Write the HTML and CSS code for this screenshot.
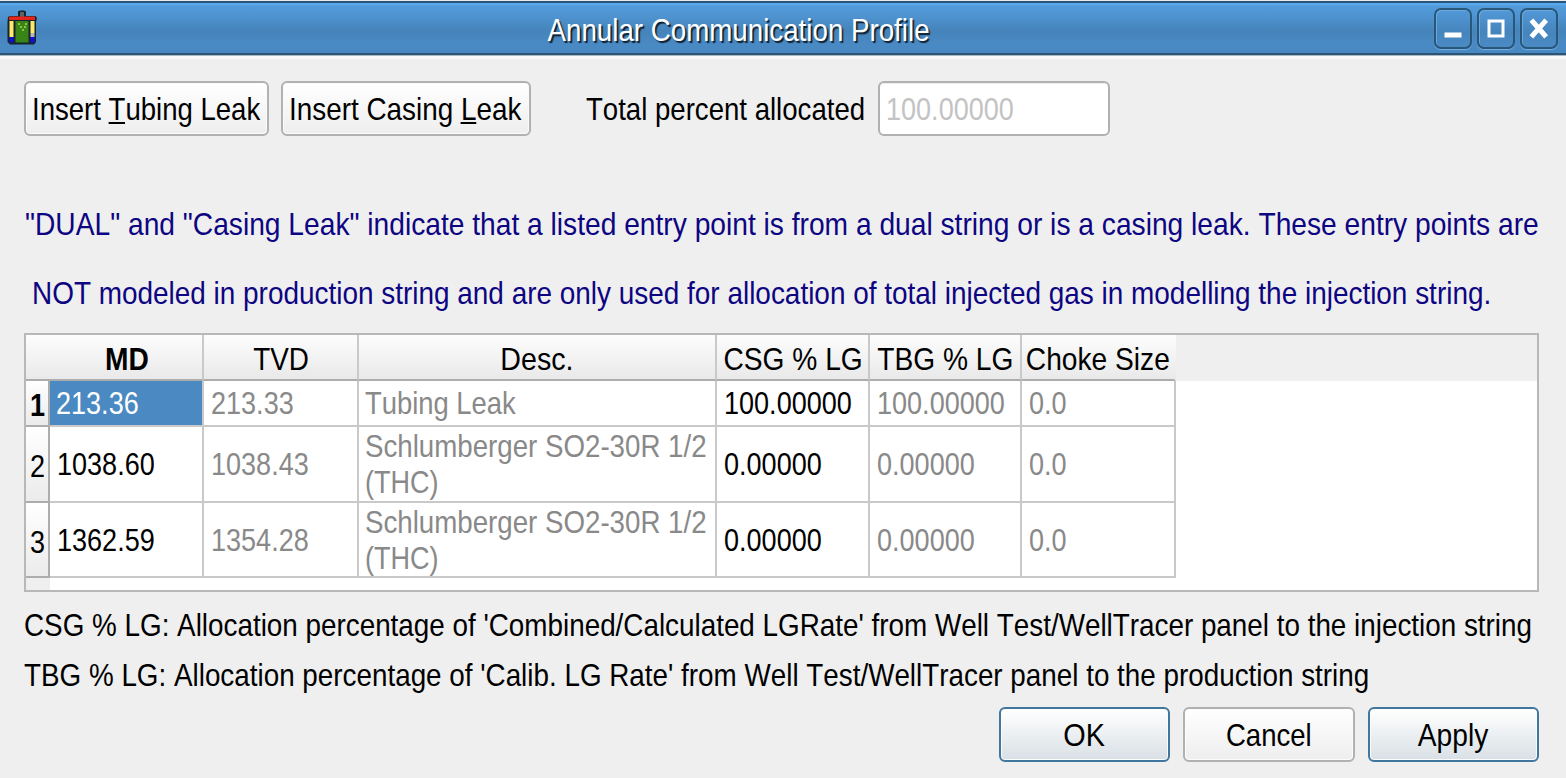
FILE: index.html
```
<!DOCTYPE html>
<html lang="en">
<head>
<meta charset="utf-8">
<title>Annular Communication Profile</title>
<link rel="stylesheet" href="styles.css">
</head>
<body>
<div class="window">
  <header class="titlebar">
    <svg class="app-icon" viewBox="0 0 32 38" width="32" height="38">
      <path d="M12 7V2.500l2-1h4l2 1V7h9.500l1.500 2-1 4v20l-2 2.500H4L1.500 33V13L2 8l1.500-1z" fill="#16242c"/>
      <path d="M14 3h4v5h-4z" fill="#59636a"/>
      <rect x="3.500" y="12" width="4" height="16" fill="#fbe96a"/>
      <rect x="24.500" y="12" width="4" height="12" fill="#fbe96a"/>
      <rect x="24.500" y="24" width="4" height="4" fill="#b9b9b4"/>
      <rect x="3.500" y="28" width="4" height="5.500" fill="#1010dd"/>
      <rect x="24.500" y="28" width="4" height="5.500" fill="#1010dd"/>
      <rect x="3" y="7.500" width="26" height="3.500" fill="#e4251b"/>
      <rect x="9.500" y="12" width="13" height="21.500" fill="#398416"/>
      <path d="M12 14h2v2h-2zM19 14h2v2h-2zM14 17h2v2h-2zM18 17h2v2h-2zM16 20h2v2h-2z" fill="#8cc43c"/>
    </svg>
    <h1 class="title"><span class="label title-text">Annular Communication Profile</span></h1>
    <div class="controls">
      <button class="control" aria-label="Minimize"><svg viewBox="2 2 34 37" width="34" height="37"><rect x="10.500" y="24.500" width="17" height="5" fill="#fff"/></svg></button>
      <button class="control" aria-label="Maximize"><svg viewBox="2 2 34 37" width="34" height="37"><path d="M12 13h14v15H12z" fill="none" stroke="#fff" stroke-width="3"/></svg></button>
      <button class="control" aria-label="Close"><svg viewBox="2 2 34 37" width="34" height="37"><path d="M13 14l11.500 13M24.500 14L13 27" fill="none" stroke="#fff" stroke-width="5" stroke-linecap="square"/></svg></button>
    </div>
  </header>
  <main class="content">
    <div class="toolbar">
      <button class="button tubing"><span class="label tubing-text">Insert <span class="key">T</span>ubing Leak</span></button>
      <button class="button casing"><span class="label casing-text">Insert Casing <span class="key">L</span>eak</span></button>
      <span class="total"><span class="label total-text">Total percent allocated</span></span>
      <div class="field"><span class="label digits">100.00000</span></div>
    </div>
    <div class="notice">
      <p class="line first"><span class="label notice-first">"DUAL" and "Casing Leak" indicate that a listed entry point is from a dual string or is a casing leak. These entry points are</span></p>
      <p class="line second"><span class="label notice-second">NOT modeled in production string and are only used for allocation of total injected gas in modelling the injection string.</span></p>
    </div>
    <div class="table">
      <div class="row head">
        <div class="corner"></div>
        <div class="cell md"><span class="label md-text">MD</span></div>
        <div class="cell"><span class="label tvd-text">TVD</span></div>
        <div class="cell"><span class="label desc-text">Desc.</span></div>
        <div class="cell lg"><span class="label csg-text">CSG % LG</span></div>
        <div class="cell"><span class="label csg-text">TBG % LG</span></div>
        <div class="cell last"><span class="label choke-text">Choke Size</span></div>
      </div>
      <div class="row r1">
        <div class="number bold"><span class="label digits">1</span></div>
        <div class="cell selected"><span class="label digits">213.36</span></div>
        <div class="cell dim"><span class="label digits">213.33</span></div>
        <div class="cell dim desc"><span class="label type-text">Tubing Leak</span></div>
        <div class="cell"><span class="label digits">100.00000</span></div>
        <div class="cell dim"><span class="label digits">100.00000</span></div>
        <div class="cell dim"><span class="label digits">0.0</span></div>
      </div>
      <div class="row r2">
        <div class="number"><span class="label digits">2</span></div>
        <div class="cell"><span class="label digits">1038.60</span></div>
        <div class="cell dim"><span class="label digits">1038.43</span></div>
        <div class="cell dim desc stack"><span class="label valve-text">Schlumberger SO2-30R 1/2</span><span class="label digits">(THC)</span></div>
        <div class="cell"><span class="label digits">0.00000</span></div>
        <div class="cell dim"><span class="label digits">0.00000</span></div>
        <div class="cell dim"><span class="label digits">0.0</span></div>
      </div>
      <div class="row r3">
        <div class="number"><span class="label digits">3</span></div>
        <div class="cell"><span class="label digits">1362.59</span></div>
        <div class="cell dim"><span class="label digits">1354.28</span></div>
        <div class="cell dim desc stack"><span class="label valve-text">Schlumberger SO2-30R 1/2</span><span class="label digits">(THC)</span></div>
        <div class="cell"><span class="label digits">0.00000</span></div>
        <div class="cell dim"><span class="label digits">0.00000</span></div>
        <div class="cell dim"><span class="label digits">0.0</span></div>
      </div>
      <div class="filler"></div>
    </div>
    <div class="legend">
      <p class="line"><span class="label legend-first">CSG % LG: Allocation percentage of 'Combined/Calculated LGRate' from Well Test/WellTracer panel to the injection string</span></p>
      <p class="line"><span class="label legend-second">TBG % LG: Allocation percentage of 'Calib. LG Rate' from Well Test/WellTracer panel to the production string</span></p>
    </div>
    <div class="actions">
      <button class="button primary"><span class="label ok-text">OK</span></button>
      <button class="button"><span class="label cancel-text">Cancel</span></button>
      <button class="button primary"><span class="label apply-text">Apply</span></button>
    </div>
  </main>
</div>
</body>
</html>
```
FILE: styles.css
```
* { box-sizing: border-box; }
body { margin: 0; background: #efefef; color: #000; font: 32px/36px "Liberation Sans", Arial, sans-serif; font-kerning: none; overflow: hidden; }
h1, p { margin: 0; font-weight: normal; }
button { margin: 0; padding: 0; font: inherit; color: inherit; font-kerning: none; }
.window { width: 1566px; height: 778px; display: flex; flex-direction: column; }

/* Condensed labels: each class sets its own horizontal scale. */
.label { display: block; flex: none; white-space: nowrap; transform: scaleX(var(--sx, .87)); transform-origin: 0 50%; }
.title-text { --sx: .866; text-shadow: 2px 2px 1px #10202e; }
.digits { --sx: .845; }
.tubing-text { --sx: .861; }
.casing-text { --sx: .871; }
.total-text { --sx: .862; }
.notice-first { --sx: .8805; }
.notice-second { --sx: .8727; }
.legend-first { --sx: .8697; }
.legend-second { --sx: .8695; }
.md-text { --sx: .88; font-weight: bold; }
.tvd-text { --sx: .87; }
.desc-text { --sx: .895; }
.csg-text { --sx: .88; }
.choke-text { --sx: .88; }
.type-text { --sx: .856; }
.valve-text { --sx: .865; }
.ok-text { --sx: .9; }
.cancel-text { --sx: .86; }
.apply-text { --sx: .88; }

.titlebar { flex: none; height: 59px; border-top: 1px solid #e6eaee; display: grid; grid-template-columns: 130px 1fr 130px; align-items: start; color: #fff; background: linear-gradient(#2b5475 0 2px, #58a8ee 2px 4px, #539bdb 5px, #4f95d2 14px, #4583ba 30px, #4a8ac4 44px, #4888c2 52px, #2b5475 52px 54px, #a9b8c5 54px 55px, #fbf9f8 55px 58px); }
.app-icon { display: block; margin: 8px 0 0 6px; }
.title { font-size: 32px; display: flex; justify-content: center; padding: 11px 88px 0 0; }
.title .label, .head .label, .actions .label { transform-origin: 50% 50%; }
.controls { display: flex; justify-content: flex-end; gap: 5px; padding: 7px 8px 0 0; }
.control { width: 38px; height: 41px; border: 2px solid #285779; border-radius: 7px; background: linear-gradient(#5299d8, #4684bc 60%, #4b8bc5); box-shadow: inset 1px 1px 0 #69a8df, 0 1px 1px #78afe0; display: grid; place-items: center; }
.control svg { display: block; }

.content { padding: 22px 27px 0 24px; display: flex; flex-direction: column; }
.toolbar { display: flex; height: 55px; }
.button { border: 2px solid #b1b1b1; border-radius: 6px; background: linear-gradient(#fff, #eee); box-shadow: inset 0 0 0 1px #fcfcfc; display: flex; align-items: center; }
.tubing { width: 245px; margin-right: 12px; padding-left: 6px; }
.casing { width: 250px; padding-left: 6px; }
.key { background: linear-gradient(#000, #000) 0 31px / 100% 2px no-repeat; }
.total { width: 292px; margin-left: 55px; display: flex; align-items: center; overflow: hidden; flex: none; }
.field { width: 232px; border: 2px solid #b1b1b1; border-radius: 6px; background: #fff; color: #c3c3c3; padding-left: 6px; display: flex; align-items: center; box-shadow: inset 0 1px 0 #eee; }
.line { display: flex; }
.notice { color: #0d0582; padding-top: 70px; height: 197px; }
.first { padding-left: 1px; }
.second { margin-top: 33px; padding-left: 8px; }

.table { height: 259px; width: 1515px; border: 2px solid #b8b8b8; background: #fff; }
.row { display: grid; grid-template-columns: 24px 154px 155px 358px 153px 152px 154px; }
.cell { border-right: 2px solid #c9c9c9; border-bottom: 2px solid #c9c9c9; padding-left: 7px; display: flex; align-items: center; overflow: hidden; }
.desc { padding-left: 6px; }
.dim { color: #898989; }
.selected { background: #4a89c1; color: #fff; padding-left: 6px; }
.stack { flex-direction: column; align-items: flex-start; justify-content: center; }
.head { height: 46px; background: #efefef; }
.head .cell, .corner { background: linear-gradient(#fdfdfd, #e9e9e9); border-bottom: 2px solid #adadad; }
.head .cell { padding: 3px 0 0; justify-content: center; }
.head .md { padding-left: 2px; }
.head .lg { padding-left: 2px; }
.head .last { border-right-color: transparent; }
.r1 { height: 46px; }
.r2 { height: 76px; }
.r3 { height: 75px; }
.number { border-right: 2px solid #adadad; border-bottom: 2px solid #adadad; background: linear-gradient(#fff, #ebebeb); padding: 4px 0 0 4px; display: flex; align-items: center; }
.bold { font-weight: bold; }
.filler { width: 24px; height: 12px; background: #efefef; }

.legend { padding-top: 15px; height: 115px; display: flex; flex-direction: column; gap: 14px; }
.actions { display: flex; justify-content: flex-end; gap: 13px; height: 55px; }
.actions .button { width: 171.5px; justify-content: center; }
.primary { border-color: #41779f; background: linear-gradient(#fff, #d9e0e5); }
```
